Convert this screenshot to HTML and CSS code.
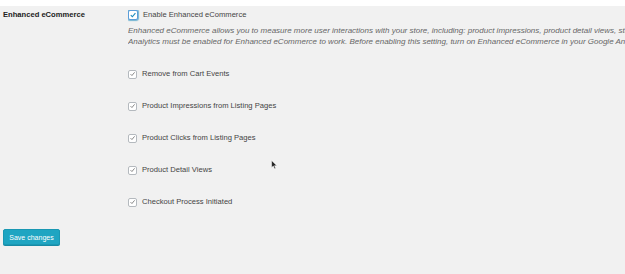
FILE: index.html
```html
<!DOCTYPE html>
<html>
<head>
<meta charset="utf-8">
<link rel="stylesheet" href="styles.css">
</head>
<body>
<div class="topbar"></div>
<div class="page">
  <div class="row">
    <div class="label">Enhanced eCommerce</div>
    <div class="field">
      <label class="opt main"><span class="cb cb-focus"><svg viewBox="0 0 10 10"><path d="M2.2 5.2 L4.2 7.2 L8 2.6" fill="none" stroke="#1e8cbe" stroke-width="1.4"/></svg></span>Enable Enhanced eCommerce</label>
      <p class="desc">Enhanced eCommerce allows you to measure more user interactions with your store, including: product impressions, product detail views, starting the checkout process, adding cart items, and removing cart items.<br>Analytics must be enabled for Enhanced eCommerce to work. Before enabling this setting, turn on Enhanced eCommerce in your Google Analytics account.</p>
      <div class="subs">
        <label class="opt"><span class="cb"><svg viewBox="0 0 10 10"><path d="M2.2 5.2 L4.2 7.2 L8 2.6" fill="none" stroke="#666" stroke-width="1.1"/></svg></span>Remove from Cart Events</label>
        <label class="opt"><span class="cb"><svg viewBox="0 0 10 10"><path d="M2.2 5.2 L4.2 7.2 L8 2.6" fill="none" stroke="#666" stroke-width="1.1"/></svg></span>Product Impressions from Listing Pages</label>
        <label class="opt"><span class="cb"><svg viewBox="0 0 10 10"><path d="M2.2 5.2 L4.2 7.2 L8 2.6" fill="none" stroke="#666" stroke-width="1.1"/></svg></span>Product Clicks from Listing Pages</label>
        <label class="opt"><span class="cb"><svg viewBox="0 0 10 10"><path d="M2.2 5.2 L4.2 7.2 L8 2.6" fill="none" stroke="#666" stroke-width="1.1"/></svg></span>Product Detail Views</label>
        <label class="opt"><span class="cb"><svg viewBox="0 0 10 10"><path d="M2.2 5.2 L4.2 7.2 L8 2.6" fill="none" stroke="#666" stroke-width="1.1"/></svg></span>Checkout Process Initiated</label>
      </div>
    </div>
  </div>
  <button class="save">Save changes</button>
</div>
<svg class="cursor" viewBox="0 0 8 12" width="7" height="10"><path d="M0.5 0.5 L0.5 9 L2.6 7.2 L4 10.5 L5.4 9.9 L4 6.8 L6.8 6.8 Z" fill="#222" stroke="#fff" stroke-width="0.6"/></svg>
</body>
</html>
```
FILE: styles.css
```css
html, body { margin: 0; padding: 0; }
body {
  width: 625px;
  height: 274px;
  overflow: hidden;
  background: #f1f1f1;
  font-family: "Liberation Sans", Arial, sans-serif;
  color: #444;
  position: relative;
}
.topbar { height: 6px; background: #fff; }
.page { padding: 0 0 0 3px; }
.row { display: flex; padding-top: 4px; }
.label {
  flex: 0 0 125px;
  font-size: 7.6px;
  font-weight: bold;
  color: #222;
  line-height: 10px;
  white-space: nowrap;
}
.field { flex: 1; min-width: 0; white-space: nowrap; overflow: hidden; }
.opt {
  display: flex;
  align-items: center;
  font-size: 7.6px;
  line-height: 10px;
  color: #444;
  height: 10px;
}
.cb {
  width: 7px;
  height: 7px;
  border: 1px solid #b4b9be;
  border-radius: 2px;
  background: #fff;
  margin-right: 5px;
  display: flex;
  align-items: center;
  justify-content: center;
}
.cb svg { width: 8px; height: 8px; }
.cb-focus {
  border-color: #5b9dd9;
  box-shadow: 0 0 1px 1px rgba(30,140,190,.6);
  width: 8px; height: 8px;
  margin-right: 5px;
}
.desc {
  margin: 5px 0 0 0;
  font-size: 8px;
  font-style: italic;
  line-height: 11px;
  color: #666;
}
.subs {
  display: flex;
  flex-direction: column;
  gap: 22px;
  margin-top: 22px;
}
.save {
  margin-top: 22px;
  background: #1fa5c2;
  border: 1px solid #1a98b3;
  border-radius: 2px;
  color: #fff;
  font-family: "Liberation Sans", Arial, sans-serif;
  font-size: 7px;
  height: 16px;
  width: 57px;
  padding: 0;
  box-shadow: 0 1px 0 #178aa5;
}
.cursor { position: absolute; left: 271px; top: 160px; }
```
